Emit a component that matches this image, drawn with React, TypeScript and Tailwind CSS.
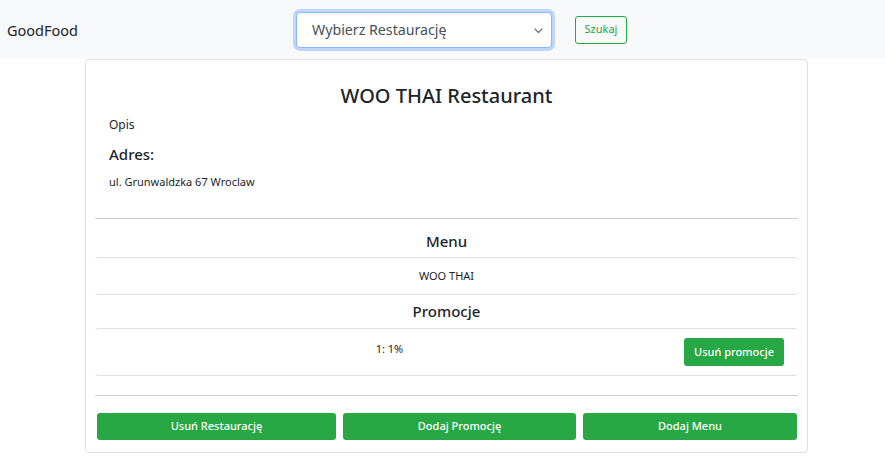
import React from "react";

export default function App() {
  const font = "font-['Segoe_UI','Noto_Sans','Open_Sans',sans-serif]";
  return (
    <div className={`min-h-screen bg-white text-[#212529] ${font}`}>
      <nav className="h-[59px] bg-[#f8f9fa] flex items-center">
        <div className="ml-[7px] text-[14.5px] leading-[20px] w-[70px]">GoodFood</div>
        <div className="ml-[219px] relative w-[256px] h-[36px] rounded-[4px] border border-[#86b7fe] bg-white shadow-[0_0_0_3px_rgba(13,110,253,0.25)] flex items-center">
          <span className="ml-[15px] text-[14.2px] text-[#495057]">Wybierz Restaurację</span>
          <svg className="absolute right-[8px] top-[15px]" width="9" height="6" viewBox="0 0 9 6">
            <path d="M1 1 L4.5 4.5 L8 1" fill="none" stroke="#6c757d" strokeWidth="1.2" strokeLinecap="round" strokeLinejoin="round" />
          </svg>
        </div>
        <button className="ml-[23px] h-[28px] w-[52px] rounded-[3px] border border-[#28a745] text-[#28a745] text-[11px] flex items-center justify-center">
          Szukaj
        </button>
      </nav>

      <div className="ml-[85px] w-[723px] h-[394px] border border-[#dfdfdf] rounded-[4px] flex flex-col">
        <div className="pt-[23px] px-[23px] h-[158px]">
          <h3 className="text-center text-[20px] leading-[25px] font-medium">WOO THAI Restaurant</h3>
          <p className="mt-[8px] text-[12px] leading-[18px]">Opis</p>
          <h5 className="mt-[9px] text-[15px] leading-[22px] font-medium">Adres:</h5>
          <p className="mt-[9px] text-[11px] leading-[16px]">ul. Grunwaldzka 67 Wroclaw</p>
        </div>
        <div className="mx-[9px] h-px bg-[#cfcfcf]" />
        <div className="mx-[9px]">
          <h5 className="mt-[11px] text-center text-[15px] leading-[22px] font-medium">Menu</h5>
          <div className="mt-[5px] h-[38px] border-y border-[#dfdfdf] rounded-[4px] flex items-center justify-center text-[11px]">
            WOO THAI
          </div>
          <h5 className="mt-[5px] text-center text-[15px] leading-[22px] font-medium">Promocje</h5>
          <div className="mt-[6px] h-[48px] border-y border-[#dfdfdf] rounded-[4px] flex items-start">
            <div className="flex-1 text-center text-[11px] leading-[16px] pt-[12px]">1: 1%</div>
            <button className="mt-[9px] mr-[14px] h-[28px] w-[100px] rounded-[3px] bg-[#28a745] text-white text-[11px] font-medium flex items-center justify-center">
              Usuń promocje
            </button>
          </div>
          <div className="mt-[19px] h-px bg-[#cfcfcf]" />
          <div className="mt-[17px] flex gap-[7px] pl-[2px]">
            <button className="w-[239px] h-[27px] rounded-[3px] bg-[#28a745] text-white text-[11px] font-medium">Usuń Restaurację</button>
            <button className="w-[233px] h-[27px] rounded-[3px] bg-[#28a745] text-white text-[11px] font-medium">Dodaj Promocję</button>
            <button className="w-[214px] h-[27px] rounded-[3px] bg-[#28a745] text-white text-[11px] font-medium">Dodaj Menu</button>
          </div>
        </div>
      </div>
    </div>
  );
}
